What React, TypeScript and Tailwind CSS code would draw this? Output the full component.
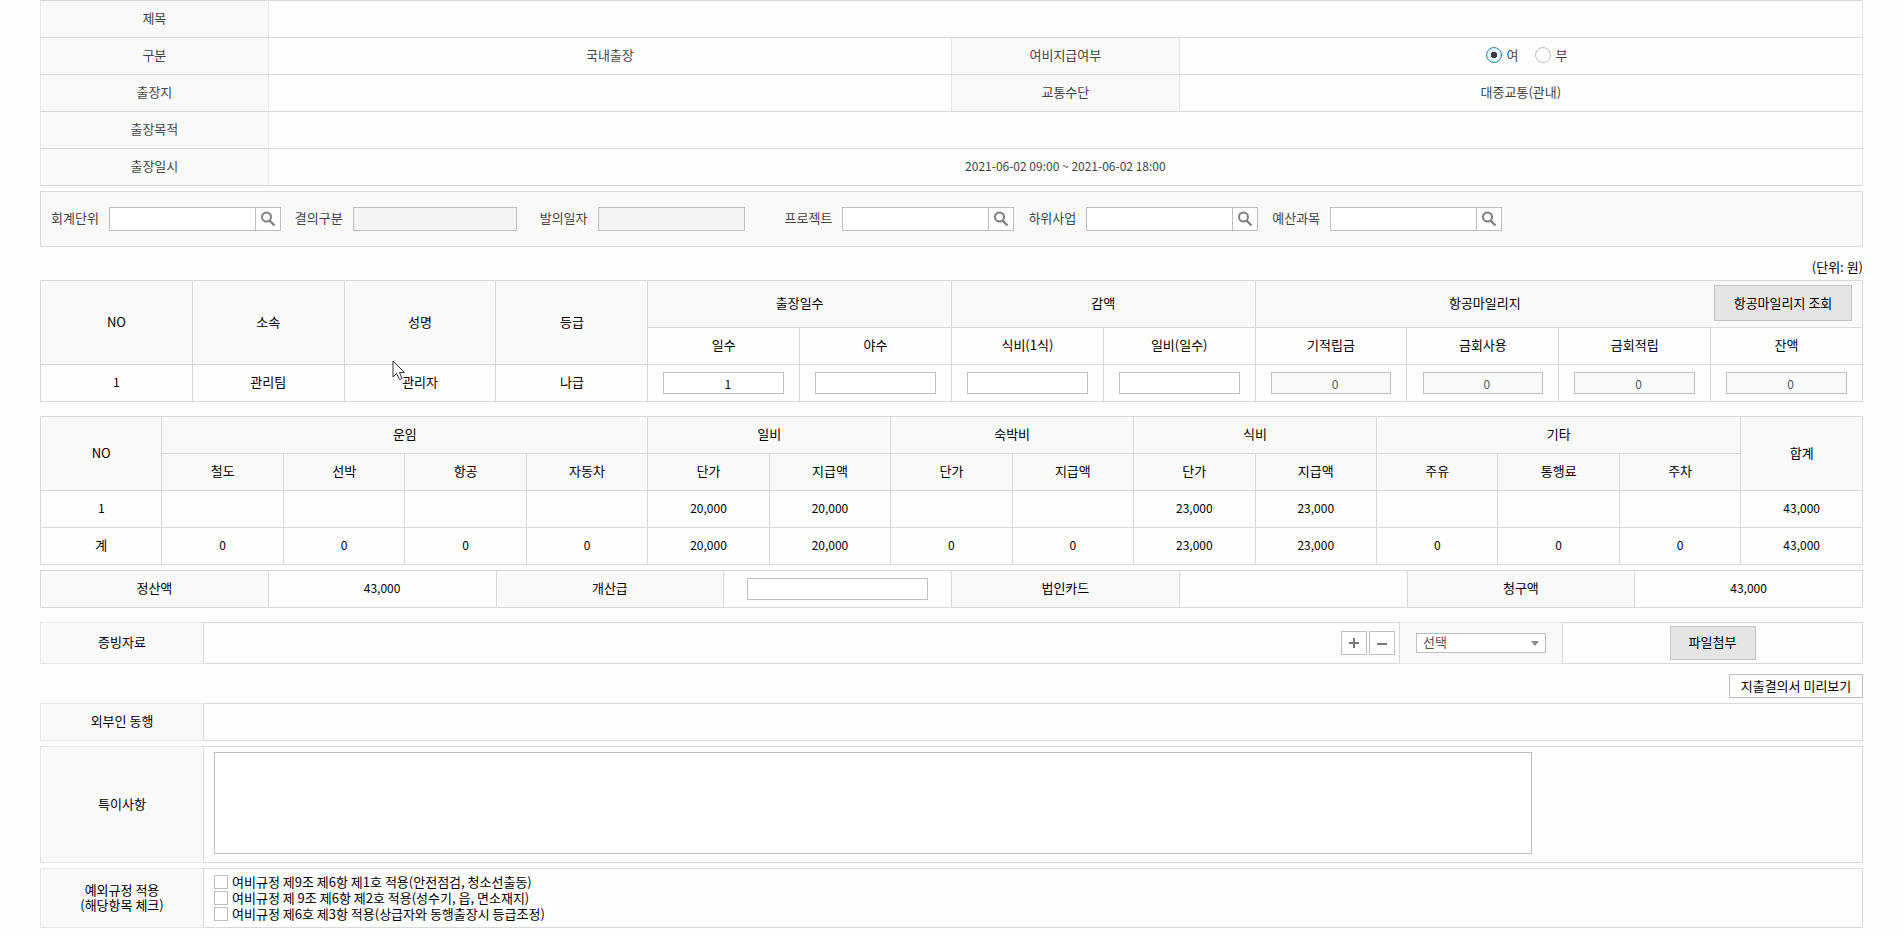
import React from "react";

const line = "border border-[#d9d9d9]";
const th = "border border-[#d9d9d9] bg-[#f9f9f9] px-0 pt-0 pb-0.5 font-normal";
const td = "border border-[#d9d9d9] px-0 pt-0 pb-0.5";
const fieldTd = "border border-[#d9d9d9] p-0";
const tableBase = "w-full table-fixed border-collapse text-center";
const box = "border border-[#bfbfbf] bg-white rounded-none outline-none";
const infoTh = "border-y border-x border-y-[#d9d9d9] border-x-[#e6e6e6] bg-[#f9f9f9] px-0 pt-0 pb-0.5 font-normal";
const infoTd = "border-y border-x border-y-[#d9d9d9] border-x-[#e6e6e6] px-0 pt-0 pb-0.5";
const sideTh = "border border-[#e6e6e6] border-r-[#d9d9d9] bg-[#f9f9f9] px-0 pt-0 pb-0.5 font-normal";
const selectTd = "border border-[#e6e6e6] border-r-[#d9d9d9] bg-[#f9f9f9] p-0";
const radio =
  "size-4 appearance-none rounded-full border border-[#bfbfbf] bg-white checked:border-[#2a86c4] checked:bg-[#e0f5fd] checked:bg-[radial-gradient(circle,#3a3a3a_0_3px,transparent_3.5px)]";

function SearchIcon() {
  return (
    <svg width="16" height="16" viewBox="0 0 16 16" fill="none" stroke="#808080" aria-hidden="true">
      <circle cx="6.5" cy="6" r="4.5" strokeWidth="2" />
      <path d="M9.5 9.5 L14.5 14.5" strokeWidth="2.4" />
    </svg>
  );
}

function SearchField({ id, label }: { id: string; label: string }) {
  return (
    <div className="flex items-center gap-2.5">
      <label htmlFor={id} className="pb-0.5">{label}</label>
      <div className="flex">
        <input id={id} type="text" className={`${box} h-6 w-[147px] px-1`} />
        <button type="button" aria-label={`${label} 검색`} className={`${box} -ml-px flex h-6 w-[26px] items-center justify-center`}>
          <SearchIcon />
        </button>
      </div>
    </div>
  );
}

const smallInput = "h-[22px] w-4/5 border border-[#bfbfbf] pl-2 text-center align-middle text-xs outline-none";

function TripInfo() {
  return (
    <table className={`${tableBase} text-[#444]`}>
      <colgroup>
        <col className="w-1/8" />
        <col className="w-3/8" />
        <col className="w-1/8" />
        <col className="w-3/8" />
      </colgroup>
      <tbody>
        <tr className="h-[37px]">
          <th scope="row" className={infoTh}>제목</th>
          <td colSpan={3} className={infoTd}></td>
        </tr>
        <tr className="h-[37px]">
          <th scope="row" className={infoTh}>구분</th>
          <td className={infoTd}>국내출장</td>
          <th scope="row" className={infoTh}>여비지급여부</th>
          <td className={infoTd}>
            <div className="flex items-center justify-center gap-[17px] pl-3">
              <label className="flex items-center gap-1">
                <input type="radio" name="pay" defaultChecked className={radio} />
                여
              </label>
              <label className="flex items-center gap-1">
                <input type="radio" name="pay" className={radio} />
                부
              </label>
            </div>
          </td>
        </tr>
        <tr className="h-[37px]">
          <th scope="row" className={infoTh}>출장지</th>
          <td className={infoTd}></td>
          <th scope="row" className={infoTh}>교통수단</th>
          <td className={infoTd}>대중교통(관내)</td>
        </tr>
        <tr className="h-[37px]">
          <th scope="row" className={infoTh}>출장목적</th>
          <td colSpan={3} className={infoTd}></td>
        </tr>
        <tr className="h-[37px]">
          <th scope="row" className={infoTh}>출장일시</th>
          <td colSpan={3} className={`${infoTd} text-xs`}>2021-06-02 09:00 ~ 2021-06-02 18:00</td>
        </tr>
      </tbody>
    </table>
  );
}

function BudgetFilter() {
  return (
    <div className={`${line} mt-[5px] flex h-14 items-center bg-[#f9f9f9] px-2.5 text-[#444]`}>
      <SearchField id="account" label="회계단위" />
      <div className="ml-3.5 flex items-center gap-2.5">
        <label htmlFor="resolution" className="pb-0.5">결의구분</label>
        <input id="resolution" type="text" readOnly className="h-6 w-[164px] border border-[#bfbfbf] bg-[#f4f4f4] px-1 outline-none" />
      </div>
      <div className="ml-[23px] flex items-center gap-2.5">
        <label htmlFor="proposed" className="pb-0.5">발의일자</label>
        <input id="proposed" type="text" readOnly className="h-6 w-[147px] border border-[#bfbfbf] bg-[#f4f4f4] px-1 outline-none" />
      </div>
      <div className="ml-10 flex gap-3.5">
        <SearchField id="project" label="프로젝트" />
        <SearchField id="subproject" label="하위사업" />
        <SearchField id="budget" label="예산과목" />
      </div>
    </div>
  );
}

function TravelerTable() {
  const sub = ["일수", "야수", "식비(1식)", "일비(일수)", "기적립금", "금회사용", "금회적립", "잔액"];
  return (
    <table className={tableBase}>
      <thead>
        <tr className="h-[47px]">
          <th rowSpan={2} className={th}>NO</th>
          <th rowSpan={2} className={th}>소속</th>
          <th rowSpan={2} className={th}>성명</th>
          <th rowSpan={2} className={th}>등급</th>
          <th colSpan={2} className={th}>출장일수</th>
          <th colSpan={2} className={th}>감액</th>
          <th colSpan={4} className={th}>
            <div className="flex items-center pr-2.5">
              <span className="flex-1">항공마일리지</span>
              <button type="button" className="h-9 w-[138px] border border-[#c4c4c4] bg-[#e5e5e5]">항공마일리지 조회</button>
            </div>
          </th>
        </tr>
        <tr className="h-[37px]">
          {sub.map((s) => (
            <th key={s} className={`${td} font-normal`}>{s}</th>
          ))}
        </tr>
      </thead>
      <tbody>
        <tr className="h-[37px]">
          <td className={`${td} text-xs`}>1</td>
          <td className={td}>관리팀</td>
          <td className={td}>관리자</td>
          <td className={td}>나급</td>
          {sub.map((s, i) => (
            <td key={s} className={fieldTd}>
              {i < 4 ? (
                <input type="text" aria-label={s} defaultValue={i === 0 ? "1" : ""} className={`${smallInput} bg-white`} />
              ) : (
                <input type="text" aria-label={s} readOnly value="0" className={`${smallInput} bg-[#fafafa] text-[#555]`} />
              )}
            </td>
          ))}
        </tr>
      </tbody>
    </table>
  );
}

function ExpenseTable() {
  const sub = ["철도", "선박", "항공", "자동차", "단가", "지급액", "단가", "지급액", "단가", "지급액", "주유", "통행료", "주차"];
  const first = ["1", "", "", "", "", "20,000", "20,000", "", "", "23,000", "23,000", "", "", "", "43,000"];
  const total = ["계", "0", "0", "0", "0", "20,000", "20,000", "0", "0", "23,000", "23,000", "0", "0", "0", "43,000"];
  return (
    <table className={`${tableBase} mt-3.5`}>
      <thead>
        <tr className="h-[37px]">
          <th rowSpan={2} className={th}>NO</th>
          <th colSpan={4} className={th}>운임</th>
          <th colSpan={2} className={th}>일비</th>
          <th colSpan={2} className={th}>숙박비</th>
          <th colSpan={2} className={th}>식비</th>
          <th colSpan={3} className={th}>기타</th>
          <th rowSpan={2} className={th}>합계</th>
        </tr>
        <tr className="h-[37px]">
          {sub.map((s, i) => (
            <th key={i} className={th}>{s}</th>
          ))}
        </tr>
      </thead>
      <tbody>
        {[first, total].map((row, r) => (
          <tr key={r} className="h-[37px]">
            {row.map((c, i) => (
              <td key={i} className={c === "계" ? td : `${td} text-xs`}>{c}</td>
            ))}
          </tr>
        ))}
      </tbody>
    </table>
  );
}

function SettlementTable() {
  return (
    <table className={`${tableBase} mt-[5px]`}>
      <tbody>
        <tr className="h-[37px]">
          <th scope="row" className={th}>정산액</th>
          <td className={`${td} text-xs`}>43,000</td>
          <th scope="row" className={th}><label htmlFor="advance">개산급</label></th>
          <td className={fieldTd}>
            <input id="advance" type="text" className={`${smallInput} bg-white`} />
          </td>
          <th scope="row" className={th}>법인카드</th>
          <td className={td}></td>
          <th scope="row" className={th}>청구액</th>
          <td className={`${td} text-xs`}>43,000</td>
        </tr>
      </tbody>
    </table>
  );
}

function EvidenceTable() {
  return (
    <table className={`${tableBase} mt-3.5`}>
      <colgroup>
        <col className="w-[163px]" />
        <col />
        <col className="w-[163px]" />
        <col className="w-[300px]" />
      </colgroup>
      <tbody>
        <tr className="h-[41px]">
          <th scope="row" className={sideTh}>증빙자료</th>
          <td className={fieldTd}>
            <div className="flex justify-end gap-0.5 pr-1">
              <button type="button" aria-label="추가" className={`${box} flex h-6 w-[26px] items-center justify-center`}>
                <svg width="12" height="12" viewBox="0 0 12 12" stroke="#777" strokeWidth="2" aria-hidden="true">
                  <path d="M1 6H11M6 1V11" />
                </svg>
              </button>
              <button type="button" aria-label="삭제" className={`${box} flex h-6 w-[26px] items-center justify-center`}>
                <svg width="12" height="12" viewBox="0 0 12 12" stroke="#777" strokeWidth="2" aria-hidden="true">
                  <path d="M1 7H11" />
                </svg>
              </button>
            </div>
          </td>
          <td className={selectTd}>
            <div className="mx-auto flex w-[130px] items-center">
              <select aria-label="증빙 종류" className={`${box} h-5 w-full appearance-none pb-0.5 pl-1.5 leading-4 text-[#555]`}>
                <option>선택</option>
              </select>
              <svg width="8" height="5" viewBox="0 0 8 5" fill="#8c8c8c" className="pointer-events-none -ml-[15px] shrink-0" aria-hidden="true">
                <path d="M0 0H8L4 5Z" />
              </svg>
            </div>
          </td>
          <td className={fieldTd}>
            <button type="button" className="h-[34px] w-[86px] border border-[#c4c4c4] bg-[#e5e5e5] pb-0.5 align-middle">파일첨부</button>
          </td>
        </tr>
      </tbody>
    </table>
  );
}

function SideColumns() {
  return (
    <colgroup>
      <col className="w-[163px]" />
      <col />
    </colgroup>
  );
}

export default function App() {
  const rules = [
    "여비규정 제9조 제6항 제1호 적용(안전점검, 청소선출동)",
    "여비규정 제 9조 제6항 제2호 적용(성수기, 읍, 면소재지)",
    "여비규정 제6호 제3항 적용(상급자와 동행출장시 등급조정)",
  ];
  return (
    <main className="relative min-h-screen bg-[#fefefe] pr-[41px] pl-10 font-['Noto_Sans_CJK_KR',sans-serif] text-[13px] leading-4 text-black">
      <TripInfo />
      <BudgetFilter />
      <p className="mt-3 mb-[5px] text-right">(단위: 원)</p>
      <TravelerTable />
      <ExpenseTable />
      <SettlementTable />
      <EvidenceTable />
      <div className="mt-2.5 flex justify-end">
        <button type="button" className={`${box} h-6 w-[134px]`}>지출결의서 미리보기</button>
      </div>
      <table className={`${tableBase} mt-[5px]`}>
        <SideColumns />
        <tbody>
          <tr className="h-[37px]">
            <th scope="row" className={sideTh}>외부인 동행</th>
            <td className={td}></td>
          </tr>
        </tbody>
      </table>
      <table className={`${tableBase} mt-[5px]`}>
        <SideColumns />
        <tbody>
          <tr className="h-[116px]">
            <th scope="row" className={sideTh}><label htmlFor="notes">특이사항</label></th>
            <td className={`${line} p-0 pl-2.5 text-left`}>
              <textarea id="notes" className={`${box} mb-1 block h-[102px] w-4/5 resize-none`} />
            </td>
          </tr>
        </tbody>
      </table>
      <table className={`${tableBase} mt-[5px]`}>
        <SideColumns />
        <tbody>
          <tr className="h-[59px]">
            <th scope="row" className={`${sideTh} leading-[15px]`}>예외규정 적용<br />(해당항목 체크)</th>
            <td className={`${line} px-2.5 py-0`}>
              {rules.map((r) => (
                <label key={r} className="flex h-4 items-center gap-1">
                  <input type="checkbox" className="size-3.5 appearance-none border border-[#bfbfbf] bg-white checked:bg-[#777]" />
                  {r}
                </label>
              ))}
            </td>
          </tr>
        </tbody>
      </table>
      <svg width="14" height="21" viewBox="0 0 14 21" className="pointer-events-none absolute top-[360px] left-[392px]" aria-hidden="true">
        <path d="M1 1V17L4.5 13.5L7.5 19.5L10 18.5L7.5 12.5H12.5Z" fill="#fff" stroke="#333" strokeWidth="1" />
      </svg>
    </main>
  );
}
